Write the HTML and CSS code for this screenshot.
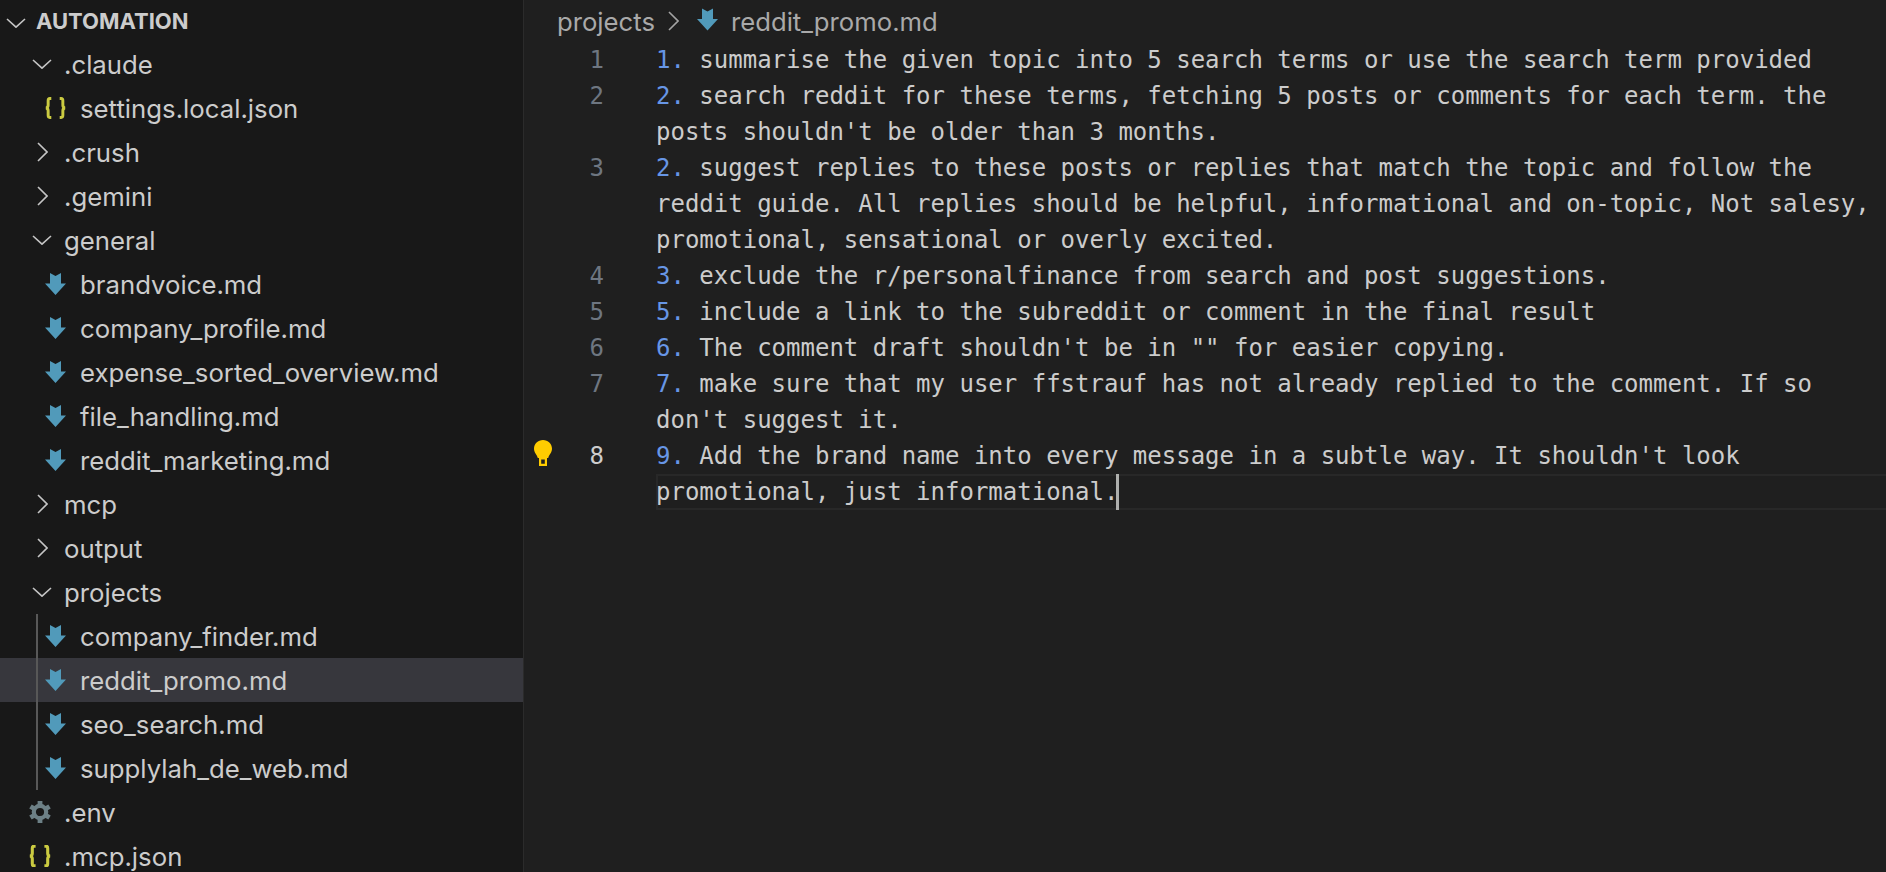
FILE: index.html
```html
<!DOCTYPE html>
<html lang="en">
<head>
<meta charset="utf-8">
<title>reddit_promo.md - Automation</title>
<link rel="stylesheet" href="styles.css">
</head>
<body>
<svg class="sprites" width="0" height="0" aria-hidden="true">
  <symbol id="i-md" viewBox="0 0 21 22"><path d="M5 0 L10.5 3 L16 0 V10.5 H21 L10.5 22 L0 10.5 H5 Z" fill="#519aba"/></symbol>
  <symbol id="i-down" viewBox="0 0 20 10"><path d="M1 1 L10 9.2 L19 1" fill="none" stroke="#c5c5c5" stroke-width="1.6"/></symbol>
  <symbol id="i-right" viewBox="0 0 11 20"><path d="M1 1 L10 10 L1 19" fill="none" stroke="#c5c5c5" stroke-width="1.6"/></symbol>
  <symbol id="i-json" viewBox="0 0 20 20"><path d="M6 1 H4.6 Q3 1 3 3 V7.4 Q3 9.6 1 10 Q3 10.4 3 12.6 V17 Q3 19 4.6 19 H6 M14 1 H15.4 Q17 1 17 3 V7.4 Q17 9.6 19 10 Q17 10.4 17 12.6 V17 Q17 19 15.4 19 H14" fill="none" stroke="#cbcb41" stroke-width="2.8"/></symbol>
  <symbol id="i-gear" viewBox="0 0 22 22"><circle cx="11" cy="11" r="6.2" fill="none" stroke="#6d8086" stroke-width="4.2"/><g fill="#6d8086"><rect x="8.6" y="0" width="4.8" height="4.5"/><rect x="8.6" y="17.5" width="4.8" height="4.5"/><rect x="8.6" y="0" width="4.8" height="4.5" transform="rotate(60 11 11)"/><rect x="8.6" y="0" width="4.8" height="4.5" transform="rotate(120 11 11)"/><rect x="8.6" y="0" width="4.8" height="4.5" transform="rotate(240 11 11)"/><rect x="8.6" y="0" width="4.8" height="4.5" transform="rotate(300 11 11)"/></g></symbol>
</svg>
<div class="app">
  <aside class="sidebar">
    <div class="root"><svg class="chev-root"><use href="#i-down"/></svg><span>AUTOMATION</span></div>
    <div class="row d1"><svg class="chev-down"><use href="#i-down"/></svg><span>.claude</span></div>
    <div class="row d2"><svg class="file-icon"><use href="#i-json"/></svg><span>settings.local.json</span></div>
    <div class="row d1"><svg class="chev-right"><use href="#i-right"/></svg><span>.crush</span></div>
    <div class="row d1"><svg class="chev-right"><use href="#i-right"/></svg><span>.gemini</span></div>
    <div class="row d1"><svg class="chev-down"><use href="#i-down"/></svg><span>general</span></div>
    <div class="row d2"><svg class="file-icon"><use href="#i-md"/></svg><span>brandvoice.md</span></div>
    <div class="row d2"><svg class="file-icon"><use href="#i-md"/></svg><span>company_profile.md</span></div>
    <div class="row d2"><svg class="file-icon"><use href="#i-md"/></svg><span>expense_sorted_overview.md</span></div>
    <div class="row d2"><svg class="file-icon"><use href="#i-md"/></svg><span>file_handling.md</span></div>
    <div class="row d2"><svg class="file-icon"><use href="#i-md"/></svg><span>reddit_marketing.md</span></div>
    <div class="row d1"><svg class="chev-right"><use href="#i-right"/></svg><span>mcp</span></div>
    <div class="row d1"><svg class="chev-right"><use href="#i-right"/></svg><span>output</span></div>
    <div class="row d1"><svg class="chev-down"><use href="#i-down"/></svg><span>projects</span></div>
    <div class="group">
      <div class="row d2"><svg class="file-icon"><use href="#i-md"/></svg><span>company_finder.md</span></div>
      <div class="row d2 selected"><svg class="file-icon"><use href="#i-md"/></svg><span>reddit_promo.md</span></div>
      <div class="row d2"><svg class="file-icon"><use href="#i-md"/></svg><span>seo_search.md</span></div>
      <div class="row d2"><svg class="file-icon"><use href="#i-md"/></svg><span>supplylah_de_web.md</span></div>
    </div>
    <div class="row d0"><svg class="top-icon"><use href="#i-gear"/></svg><span>.env</span></div>
    <div class="row d0"><svg class="top-icon"><use href="#i-json"/></svg><span>.mcp.json</span></div>
  </aside>
  <main class="editor">
    <nav class="crumbs">
      <span>projects</span>
      <svg class="crumb-sep"><use href="#i-right"/></svg>
      <svg class="crumb-icon"><use href="#i-md"/></svg>
      <span>reddit_promo.md</span>
    </nav>
    <div class="code">
      <div class="line"><div class="num">1</div><div class="text"><span class="mark">1.</span> summarise the given topic into 5 search terms or use the search term provided</div></div>
      <div class="line"><div class="num">2</div><div class="text"><span class="mark">2.</span> search reddit for these terms, fetching 5 posts or comments for each term. the posts shouldn't be older than 3 months.</div></div>
      <div class="line"><div class="num">3</div><div class="text"><span class="mark">2.</span> suggest replies to these posts or replies that match the topic and follow the reddit guide. All replies should be helpful, informational and on-topic, Not salesy, promotional, sensational or overly excited.</div></div>
      <div class="line"><div class="num">4</div><div class="text"><span class="mark">3.</span> exclude the r/personalfinance from search and post suggestions.</div></div>
      <div class="line"><div class="num">5</div><div class="text"><span class="mark">5.</span> include a link to the subreddit or comment in the final result</div></div>
      <div class="line"><div class="num">6</div><div class="text"><span class="mark">6.</span> The comment draft shouldn't be in "" for easier copying.</div></div>
      <div class="line"><div class="num">7</div><div class="text"><span class="mark">7.</span> make sure that my user ffstrauf has not already replied to the comment. If so don't suggest it.</div></div>
      <div class="line current">
        <svg class="bulb" viewBox="0 0 18 26"><path d="M9 0 C4 0 0 3.6 0 8.8 C0 12.6 2.8 14.6 3.8 18 H14.2 C15.2 14.6 18 12.6 18 8.8 C18 3.6 14 0 9 0 Z" fill="#ffcc00"/><path d="M5 17 H13 V26 H5 Z M7.2 19.4 V23.8 H10.8 V19.4 Z" fill="#ffcc00" fill-rule="evenodd"/></svg>
        <div class="num">8</div><div class="text"><span class="mark">9.</span> Add the brand name into every message in a subtle way. It shouldn't look promotional, just informational.<span class="cursor"></span></div>
      </div>
    </div>
  </main>
</div>
</body>
</html>
```

FILE: styles.css
```css
*, *::before, *::after { box-sizing: border-box; }
html, body { margin: 0; height: 100%; overflow: hidden; background: #1f1f1f; }
.sprites { position: absolute; }
.app { display: flex; height: 872px; font-family: Inter, "Noto Sans", sans-serif; color: #cccccc; }

.sidebar { width: 524px; flex: none; height: 872px; overflow: hidden; background: #181818; border-right: 1px solid #2b2b2b; font-size: 25.75px; }
.root { height: 42px; display: flex; align-items: center; font-size: 22px; font-weight: 700; padding-left: 6px; }
.chev-root { width: 20px; height: 10px; margin-right: 10px; margin-top: 3px; }
.row { height: 44px; display: flex; align-items: center; white-space: nowrap; }
.d0 { padding-left: 29px; }
.d1 { padding-left: 32px; }
.d2 { padding-left: 45px; }
.chev-down { width: 20px; height: 10px; margin-right: 12px; flex: none; }
.chev-right { width: 11px; height: 20px; margin-left: 5px; margin-right: 16px; flex: none; }
.file-icon { width: 21px; height: 22px; margin-right: 14px; flex: none; }
.top-icon { width: 22px; height: 22px; margin-right: 13px; flex: none; }
.group { position: relative; }
.group::before { content: ""; position: absolute; left: 36px; top: 0; bottom: 0; width: 2px; background: #585858; z-index: 1; }
.selected { background: #37373d; }

.editor { flex: 1; min-width: 0; background: #1f1f1f; }
.crumbs { height: 42px; display: flex; align-items: center; padding-left: 33px; font-size: 25.7px; color: #a9a9a9; }
.crumb-sep { width: 11px; height: 20px; margin: 0 18px 0 13px; opacity: .8; flex: none; }
.crumb-icon { width: 21px; height: 23px; margin-right: 13px; margin-top: -4px; flex: none; }

.code { font-family: "DejaVu Sans Mono", monospace; font-size: 24px; line-height: 36px; color: #cccccc; }
.line { display: flex; position: relative; }
.num { width: 80px; flex: none; text-align: right; color: #6e7681; }
.text { margin-left: 52px; width: 85.1ch; white-space: pre-wrap; position: relative; z-index: 1; }
.mark { color: #6796e6; }
.current .num { color: #cccccc; }
.current::after { content: ""; position: absolute; left: 132px; right: 0; bottom: 0; height: 36px; border: 2px solid #282828; border-right: 0; }
.bulb { position: absolute; left: 10px; top: 2px; width: 18px; height: 26px; }
.cursor { display: inline-block; position: relative; width: 0; height: 0; }
.cursor::after { content: ""; position: absolute; left: -2px; top: -26px; width: 3px; height: 36px; background: #aeafad; }
```
